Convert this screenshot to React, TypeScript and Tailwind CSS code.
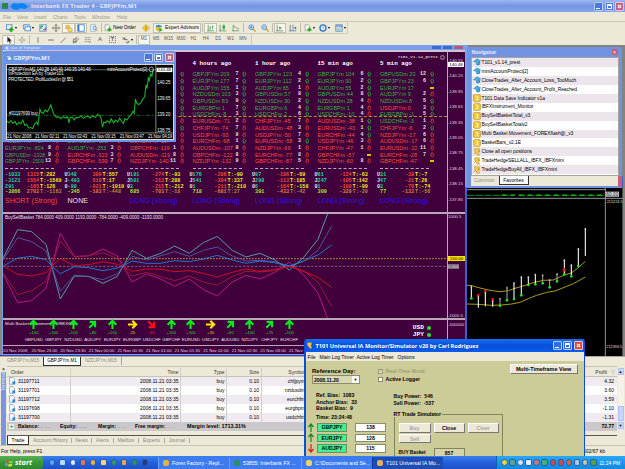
import clsx from "clsx";
import type { ReactNode } from "react";

type Quote = [string, string, string];

const SANS = "font-['Liberation_Sans',Arial,sans-serif]";
const MONO = "font-['Liberation_Mono',monospace]";

/* ---------- market data ---------- */

// symbol + value, strength, arrow (u = up, d = down, e = equal). First `green` rows are long.
const columns: {
  title: string;
  green: number;
  rows: Quote[];
  totals: string[][];
  signal: string;
}[] = [
  {
    title: "",
    green: 14,
    rows: [
      ["", "", ""], ["", "", ""], ["", "", ""], ["", "", ""], ["", "", ""], ["", "", ""], ["", "", ""],
      ["", "", ""], ["", "", ""], ["", "", ""],
      ["AUDJPYm -737", "8", "d"],
      ["EURJPYm -824", "8", "d"],
      ["GBPUSDm -1028", "8", "d"],
      ["GBPJPYm -1509", "13", "d"],
    ],
    totals: [["", "-1033", "1315", "T:282"], ["", "-3123", "1554", "T:-1569"], ["", "291", "-165", "T:126"], ["", "-3866", "2703", "T:-1163"]],
    signal: "SHORT (Strong)",
  },
  {
    title: "",
    green: 12,
    rows: [
      ["", "", ""], ["", "", ""], ["", "", ""], ["", "", ""], ["", "", ""], ["", "", ""], ["", "", ""],
      ["", "", ""], ["", "", ""], ["", "", ""],
      ["EURUSDm -185", "7", "d"],
      ["AUDJPYm -253", "3", "d"],
      ["EURCHFm -323", "3", "d"],
      ["GBPCHFm -599", "7", "d"],
    ],
    totals: [["U", "348", "309", "T:557"], ["J", "-493", "510", "T:17"], ["0", "-98", "-921", "T:-1019"], ["", "-345", "-103", "T:-448"]],
    signal: "NONE",
  },
  {
    title: "",
    green: 7,
    rows: [
      ["", "", "u"], ["", "", "u"], ["", "", "u"], ["", "", "u"], ["", "", "u"], ["", "", "u"], ["", "", "u"],
      ["", "", "d"], ["", "", "u"], ["", "", "d"],
      ["EURCHFm -117", "7", "d"],
      ["GBPCHFm -119", "1", "d"],
      ["AUDUSDm -119", "8", "d"],
      ["NZDJPYm -140", "11", "d"],
    ],
    totals: [["U", "181", "-274", "T:-93"], ["J", "501", "-213", "T:288"], ["0", "3", "-215", "T:-212"], ["", "685", "-703", "T:-18"]],
    signal: "LONG (Strong)",
  },
  {
    title: "4 hours ago",
    green: 7,
    rows: [
      ["GBPJPYm 209", "7", "u"],
      ["EURJPYm 177", "7", "u"],
      ["AUDJPYm 155", "1", "u"],
      ["NZDUSDm 103", "3", "u"],
      ["GBPUSDm 83", "9", "u"],
      ["EURGBPm 1", "7", "u"],
      ["USDCHFm -8", "3", "u"],
      ["EURUSDm -71", "2", "d"],
      ["CHFJPYm -74", "7", "d"],
      ["USDJPYm -93", "9", "d"],
      ["EURCHFm -98", "1", "u"],
      ["AUDUSDm -107", "9", "d"],
      ["GBPCHFm -122", "8", "d"],
      ["NZDJPYm -132", "9", "d"],
    ],
    totals: [["U", "176", "-286", "T:-90"], ["J", "541", "-204", "T:337"], ["0", "1", "-211", "T:-210"], ["", "718", "-681", "T:37"]],
    signal: "LONG (Strong)",
  },
  {
    title: "1 hour ago",
    green: 7,
    rows: [
      ["GBPJPYm 123", "4", "u"],
      ["EURJPYm 112", "2", "u"],
      ["AUDJPYm 65", "1", "d"],
      ["GBPUSDm 57", "8", "u"],
      ["NZDUSDm 30", "2", "u"],
      ["EURGBPm 6", "4", "u"],
      ["USDCHFm 2", "6", "u"],
      ["CHFJPYm -45", "7", "d"],
      ["AUDUSDm -48", "3", "d"],
      ["USDJPYm -50", "7", "d"],
      ["EURUSDm -58", "3", "u"],
      ["NZDJPYm -69", "1", "d"],
      ["EURCHFm -77", "8", "d"],
      ["GBPCHFm -87", "5", "d"],
    ],
    totals: [["U", "97", "-186", "T:-69"], ["J", "298", "-113", "T:185"], ["0", "6", "-164", "T:-158"], ["", "391", "-433", "T:-42"]],
    signal: "LONG (Strong)",
  },
  {
    title: "15 min ago",
    green: 7,
    rows: [
      ["GBPJPYm 104", "6", "u"],
      ["EURJPYm 90", "2", "u"],
      ["AUDJPYm 55", "2", "u"],
      ["GBPUSDm 44", "8", "u"],
      ["NZDUSDm 28", "4", "d"],
      ["EURGBPm 1", "4", "d"],
      ["USDCHFm -10", "4", "d"],
      ["AUDUSDm -38", "1", "u"],
      ["EURUSDm -43", "1", "u"],
      ["EURCHFm -44", "4", "u"],
      ["USDJPYm -46", "3", "d"],
      ["CHFJPYm -47", "1", "d"],
      ["GBPCHFm -57", "", "e"],
      ["NZDJPYm -60", "8", "d"],
    ],
    totals: [["U", "61", "-124", "T:-63"], ["J", "247", "-105", "T:142"], ["0", "1", "-100", "T:-99"], ["", "309", "-329", "T:-20"]],
    signal: "LONG (Strong)",
  },
  {
    title: "5 min ago",
    green: 5,
    rows: [
      ["GBPUSDm 20", "12", "u"],
      ["GBPJPYm 23", "6", "u"],
      ["EURJPYm 17", "", "e"],
      ["AUDJPYm 9", "2", "d"],
      ["NZDUSDm 8", "5", "u"],
      ["USDJPYm 0", "3", "u"],
      ["EURGBPm -1", "5", "u"],
      ["USDCHFm -3", "1", "d"],
      ["CHFJPYm -6", "2", "u"],
      ["NZDJPYm -17", "6", "d"],
      ["AUDUSDm -17", "6", "d"],
      ["EURUSDm -22", "11", "d"],
      ["EURCHFm -28", "7", "d"],
      ["GBPCHFm -47", "", "e"],
    ],
    totals: [["U", "31", "-38", "T:-7"], ["J", "47", "-21", "T:26"], ["0", "3", "-76", "T:-74"], ["", "77", "-133", "T:-56"]],
    signal: "LONG (Strong)",
  },
];

const movement: [string, string, string][] = [
  ["GBPUSD", "+100", "up"],
  ["GBPJPY", "+100", "up"],
  ["NZDUSD", "+100", "up"],
  ["AUDJPY", "+80", "diag"],
  ["EURJPY", "+100", "up"],
  ["EURGBP", "-25", "right"],
  ["USDCHF", "-65", "down"],
  ["GBPCHF", "+100", "up"],
  ["EURUSD", "+100", "up"],
  ["USDJPY", "+30", "right"],
  ["AUDUSD", "+60", "diag"],
  ["NZDJPY", "+100", "up"],
  ["CHFJPY", "+75", "diag"],
  ["EURCHF", "+100", "up"],
];

const orders: [string, string][] = [
  ["31197711", "chfjpym"],
  ["31197701", "nzdusdm"],
  ["31197712", "eurchfm"],
  ["31197698", "eurgbpm"],
  ["31197700", "usdchfm"],
];

const profits = ["4.32", "3.60", "3.59", "-1.10", "-1.31"];

const navItems: [string, string][] = [
  ["ea", "T101_v1.14_prest"],
  ["ea", "miniAccountProtect[2]"],
  ["ea", "CloseTrades_After_Account_Loss_TooMuch"],
  ["ea", "CloseTrades_After_Account_Profit_Reached"],
  ["ind", "T101 Data Save Indicator v1a"],
  ["ind", "IBFXInstrument_Monitor"],
  ["ind", "BuySellBasketTotal_v3"],
  ["ind", "BuySellBasketTotalv2"],
  ["ind", "Multi Basket Movement_FOREXflash@_v3"],
  ["ind", "BasketBars_v2.1E"],
  ["scr", "Close all open positions"],
  ["scr", "TradeHedgeSELLALL_IBFX_IBFXmini"],
  ["scr", "TradeHedgeBuyAll_IBFX_IBFXmini"],
];

/* ---------- basket lines ---------- */

const basket: { color: string; mirror: string; points: number[][] }[] = [
  {
    color: "#5aa9b4",
    mirror: "#c81888",
    points: [[10, 140], [53, 56], [95, 62], [138, 100], [155, 165], [181, 264], [223, 195], [266, 196], [309, 217], [352, 196], [370, 165], [396, 118], [440, 142], [480, 128], [524, 105], [568, 127], [610, 95], [652, 76], [697, 118], [738, 138], [780, 127], [823, 146], [868, 177], [910, 140], [954, 85], [983, 8]],
  },
  {
    color: "#4f5fa6",
    mirror: "#a01c38",
    points: [[10, 145], [53, 80], [95, 92], [138, 120], [155, 165], [181, 241], [223, 193], [266, 197], [309, 206], [352, 188], [370, 165], [396, 136], [440, 147], [480, 135], [524, 122], [568, 136], [610, 118], [652, 108], [697, 135], [738, 150], [780, 148], [823, 152], [868, 165], [910, 152], [954, 118], [995, 45]],
  },
  {
    color: "#1c86dc",
    mirror: "#e00c1c",
    points: [[10, 165], [53, 141], [95, 136], [138, 146], [155, 165], [181, 188], [223, 167], [266, 170], [309, 179], [352, 171], [370, 165], [396, 150], [440, 157], [480, 157], [524, 149], [568, 152], [610, 144], [652, 133], [697, 147], [738, 157], [780, 150], [823, 155], [868, 165], [910, 150], [954, 132], [995, 102]],
  },
];

const toPoints = (pts: number[][], flip = false) =>
  pts.map(([x, y]) => `${x},${flip ? 331 - y : y}`).join(" ");

/* ---------- small parts ---------- */

function CaptionButtons({ bright = false }: { bright?: boolean }) {
  const blue = bright ? "bg-[#2f6cf0]" : "bg-[#4a78dc]";
  return (
    <div className="flex gap-[1.5px]">
      <div className={clsx("flex h-[9px] w-[9px] items-end rounded-[1px] border border-[#b8ccf6] p-px", blue)}>
        <div className="h-px w-[4px] bg-white" />
      </div>
      <div className={clsx("flex h-[9px] w-[9px] items-center justify-center rounded-[1px] border border-[#b8ccf6]", blue)}>
        <div className="h-[5px] w-[5px] border border-t-2 border-white" />
      </div>
      <CloseBox bright={bright} />
    </div>
  );
}

function CloseBox({ bright = false }: { bright?: boolean }) {
  return (
    <div className={clsx("flex h-[9px] w-[9px] items-center justify-center rounded-[1px] border border-[#e8c8d8]", bright ? "bg-[#e0482a]" : "bg-[#c0607c]")}>
      <svg viewBox="0 0 6 6" className="size-[5px]" stroke="#fff" strokeWidth="1.3">
        <path d="M1 1L5 5M5 1L1 5" />
      </svg>
    </div>
  );
}

const glyphs: Record<string, ReactNode> = {
  newChart: (
    <>
      <rect x="0.5" y="1" width="7" height="6" fill="#e8f2fc" stroke="#4a80c0" />
      <path d="M6.5 4v6M3.5 7h6" stroke="#18a818" strokeWidth="2.2" />
    </>
  ),
  profiles: (
    <>
      <rect x="0.8" y="1" width="7" height="5" fill="#d8e8fa" stroke="#4a88d0" />
      <rect x="2.5" y="3.5" width="7" height="5" fill="#eef6ff" stroke="#4a88d0" />
    </>
  ),
  market: (
    <>
      <rect x="1" y="1" width="8" height="8" fill="#dcecfc" stroke="#5a90d0" />
      <path d="M2.5 6V3h2.5" stroke="#18a040" strokeWidth="1.5" fill="none" />
      <path d="M5 7.2h3V4.5" stroke="#d04030" strokeWidth="1.5" fill="none" />
    </>
  ),
  move: <path d="M5 .5v9M.5 5h9M3.5 2L5 .5 6.5 2M3.5 8L5 9.5 6.5 8M2 3.5L.5 5 2 6.5M8 3.5L9.5 5 8 6.5" fill="none" stroke="#666" />,
  nav: (
    <>
      <path d="M1 2h4l1 1.2V6H1z" fill="#f4cc48" stroke="#b08820" strokeWidth=".6" />
      <path d="M4 5h4l1 1v3.5H4z" fill="#f8dc68" stroke="#b08820" strokeWidth=".6" />
    </>
  ),
  terminal: (
    <>
      <rect x="1" y="1" width="8" height="8" fill="#fff" stroke="#3878c8" />
      <rect x="1" y="1" width="2" height="8" fill="#3878c8" />
    </>
  ),
  tester: (
    <>
      <rect x="1" y="1" width="6" height="8" fill="#e4eefa" stroke="#88a8cc" strokeWidth=".8" />
      <circle cx="6" cy="5" r="2" fill="#cde6fa" stroke="#4a80b8" strokeWidth=".8" />
      <path d="M7.5 6.5L9.5 9" stroke="#c89030" strokeWidth="1.2" />
    </>
  ),
  order: (
    <>
      <path d="M1.5 1h4l1.5 1.5V8H1.5z" fill="#fff" stroke="#777" strokeWidth=".7" />
      <path d="M6.8 4.5v5M4.3 7h5" stroke="#18a818" strokeWidth="2" />
    </>
  ),
  warn: (
    <>
      <path d="M5 .5L9.5 5 5 9.5.5 5z" fill="#f8d030" stroke="#c09020" strokeWidth=".7" />
      <path d="M5 3v3M5 6.8v1" stroke="#7a5a10" />
    </>
  ),
  expert: (
    <>
      <circle cx="4.5" cy="5.5" r="3.5" fill="#e4b838" />
      <path d="M.5 4C2 0 7 0 9 3.5z" fill="#2c90d8" />
      <path d="M5.5 5v5l4-2.5z" fill="#20b020" />
    </>
  ),
  bars: <path d="M1.5 1v8M0 8.5h9M4 3v4M3 6h1M4 4h1M7 2v4M6 5h1M7 3h1" fill="none" stroke="#3a9048" strokeWidth=".9" />,
  candles: (
    <>
      <path d="M1.5 1v8M0 8.5h9M6 .5v7" fill="none" stroke="#508858" strokeWidth=".9" />
      <rect x="4.5" y="2" width="3" height="4" fill="#20b040" />
    </>
  ),
  line: <path d="M1.5 1v8M0 8.5h9M2 3c3 0 3 3 7 3" fill="none" stroke="#509060" strokeWidth=".9" />,
  zoomIn: (
    <>
      <path d="M6 6l3.5 3.5" stroke="#d8a030" strokeWidth="1.8" />
      <circle cx="4" cy="4" r="3" fill="#d8ecfc" stroke="#3c7cc8" />
      <path d="M2.5 4h3M4 2.5v3" stroke="#2868c0" strokeWidth=".9" />
    </>
  ),
  zoomOut: (
    <>
      <path d="M6 6l3.5 3.5" stroke="#d8a030" strokeWidth="1.8" />
      <circle cx="4" cy="4" r="3" fill="#d8ecfc" stroke="#3c7cc8" />
      <path d="M2.5 4h3" stroke="#2868c0" strokeWidth=".9" />
    </>
  ),
  scroll: (
    <>
      <path d="M1.5 1v8M0 8.5h9" stroke="#507858" strokeWidth=".9" />
      <path d="M4 3l3.5 2L4 7z" fill="#30a840" />
    </>
  ),
  shift: (
    <>
      <path d="M1.5 1v8M0 8.5h9M5 1v7" stroke="#486c88" strokeWidth=".9" />
      <path d="M9 3L6 5l3 2z" fill="#3878b8" />
    </>
  ),
  clock: (
    <>
      <circle cx="5" cy="5" r="3.8" fill="#e8f4fe" stroke="#2870c8" strokeWidth="1.6" />
      <path d="M5 3v2h1.5" stroke="#555" strokeWidth=".7" fill="none" />
    </>
  ),
  template: (
    <>
      <rect x="1" y="1" width="8" height="8" fill="#e8f4fe" stroke="#4888c8" />
      <path d="M1 2.5h8" stroke="#4888c8" strokeWidth="1.5" />
      <path d="M2 5l2 .5 2-1 2 .5" stroke="#d06030" fill="none" strokeWidth=".8" />
      <path d="M2 7.5l2-.5 2 .5 2-1" stroke="#30a040" fill="none" strokeWidth=".8" />
    </>
  ),
  cursor: <path d="M3 .5v7.5l1.8-1.7 1.2 3 1.2-.6-1.2-2.7H8.5z" fill="#222" />,
  cross: <path d="M5 1v3M5 6v3M1 5h3M6 5h3" stroke="#666" strokeWidth=".9" />,
  vline: <path d="M5 1.5v7" stroke="#666" />,
  hline: <path d="M1.5 5h7" stroke="#555" />,
  trend: <path d="M2 8.5L8.5 2" stroke="#666" />,
  channel: <path d="M1 6L7 1M2 9L9 3M2 3v6M5 2v6M1 7.5h5" stroke="#666" strokeWidth=".9" />,
  fibo: <path d="M1 2h8M1 4.5h8M1 7h8M7 7.5v2" stroke="#777" strokeWidth=".9" strokeDasharray="1.5 .5" />,
  arrows: <path d="M1 2l3 3M4 2L1 4M5 7l2 2 2-3M4 4l3 1" stroke="#444" strokeWidth="1.1" fill="none" />,
  doc: (
    <>
      <path d="M2 .8h4l2 2V9H2z" fill="#fff" stroke="#7890a8" strokeWidth=".9" />
      <rect x="5.5" y="5.5" width="3.5" height="3.5" fill="#2888d8" />
    </>
  ),
  ea: (
    <>
      <path d="M.5 4.5L5 1l4.5 2.5L5.5 6z" fill="#48b0e4" stroke="#2478b0" strokeWidth=".6" />
      <path d="M4 6l5-2v4L6 9.5 4 8.5z" fill="#3090cc" />
      <path d="M5 6.5l2-1v1.5z" fill="#f0d080" />
    </>
  ),
  ind: (
    <>
      <rect x=".8" y=".8" width="8.4" height="8.4" rx="1" fill="#f0c838" stroke="#b88818" strokeWidth=".8" />
      <path d="M3 2.5h2.5v5M3 7.5h4M5.5 4.5h1.5" stroke="#fff6c8" strokeWidth="1" fill="none" />
    </>
  ),
  scr: (
    <>
      <path d="M2 1h6v3l-1 1 1 4H5L4 6 2 5z" fill="#f4cc50" stroke="#c09028" strokeWidth=".7" />
      <path d="M.8 8l3-3M6 3l3 2" stroke="#a87818" strokeWidth=".8" />
    </>
  ),
};

function Glyph({ name, className = "size-[8px]" }: { name: string; className?: string }) {
  return (
    <svg viewBox="0 0 10 10" className={clsx("shrink-0", className)}>
      {glyphs[name]}
    </svg>
  );
}

function Cell({ w, pressed, children }: { w: string; pressed?: boolean; children?: ReactNode }) {
  return (
    <div className={clsx("flex h-[10px] shrink-0 items-center justify-center", w, pressed && "border border-[#c4c0ae] bg-[#f7f5ee]")}>
      {children}
    </div>
  );
}

const Sep = () => <div className="mx-px h-[9px] w-px shrink-0 bg-[#c0bcab]" />;
const Caret = () => <span className="ml-px size-0 border-x-[1.5px] border-t-[2px] border-x-transparent border-t-black" />;

function Toolbars() {
  return (
    <div className="h-[24px] border-t border-[#c9c5b4] text-[5px]">
      <div className="flex h-[12px] w-[348px] items-center border-r border-b border-[#cfcbba] pl-[2px]">
        <Cell w="w-[18px]"><Glyph name="newChart" /><Caret /></Cell>
        <Cell w="w-[16px]"><Glyph name="profiles" /><Caret /></Cell>
        <Cell w="w-[14px]"><Glyph name="market" /></Cell>
        <Cell w="w-[12px]"><Glyph name="move" /></Cell>
        <Cell w="w-[13px]" pressed><Glyph name="nav" /></Cell>
        <Cell w="w-[12px]" pressed><Glyph name="terminal" /></Cell>
        <Cell w="w-[13px]"><Glyph name="tester" /></Cell>
        <Sep />
        <Cell w="w-[36px]"><Glyph name="order" /><span className="ml-px w-[25px] text-[4.9px] tracking-[-0.1px] whitespace-nowrap">New Order</span></Cell>
        <Cell w="w-[14px]"><Glyph name="warn" /></Cell>
        <Cell w="w-[48px]" pressed><Glyph name="expert" /><span className="ml-[2px] text-[4.9px] whitespace-nowrap">Expert Advisors</span></Cell>
        <Sep />
        <Cell w="w-[13px]" pressed><Glyph name="bars" /></Cell>
        <Cell w="w-[12px]"><Glyph name="candles" /></Cell>
        <Cell w="w-[13px]"><Glyph name="line" /></Cell>
        <Sep />
        <Cell w="w-[13px]"><Glyph name="zoomIn" /></Cell>
        <Cell w="w-[13px]"><Glyph name="zoomOut" /></Cell>
        <Sep />
        <Cell w="w-[12px]" pressed><Glyph name="scroll" /></Cell>
        <Cell w="w-[13px]"><Glyph name="shift" /></Cell>
        <Sep />
        <Cell w="w-[15px]"><Glyph name="order" /><Caret /></Cell>
        <Cell w="w-[15px]"><Glyph name="clock" /><Caret /></Cell>
        <Cell w="w-[16px]"><Glyph name="template" /><Caret /></Cell>
      </div>
      <div className="flex h-[12px] w-[252px] items-center border-r border-b border-[#cfcbba] pl-[2px] text-[4.6px] text-[#555]">
        <Cell w="w-[13px]" pressed><Glyph name="cursor" /></Cell>
        <Cell w="w-[13px]"><Glyph name="cross" /></Cell>
        <Sep />
        <Cell w="w-[14px]"><Glyph name="vline" /></Cell>
        <Cell w="w-[12px]"><Glyph name="hline" /></Cell>
        <Cell w="w-[12px]"><Glyph name="trend" /></Cell>
        <Cell w="w-[13px]"><Glyph name="channel" /></Cell>
        <Cell w="w-[12px]"><Glyph name="fibo" /></Cell>
        <Cell w="w-[12px]"><span className="text-[6px] leading-[7px]">A</span></Cell>
        <Cell w="w-[13px]"><span className="size-[7px] border border-dotted border-[#777] text-center text-[5px] leading-[5px] font-bold">T</span></Cell>
        <Cell w="w-[16px]"><Glyph name="arrows" /><Caret /></Cell>
        <Sep />
        <Cell w="w-[12px]" pressed>M1</Cell>
        {["M5", "M15", "M30", "H1", "H4", "D1", "W1", "MN"].map((t) => (
          <Cell key={t} w="w-[12.4px]">{t}</Cell>
        ))}
      </div>
    </div>
  );
}

/* ---------- purple chart window ---------- */

function Mark({ kind }: { kind: string }) {
  if (kind === "e") return <div className="h-[2px] w-[4px] bg-[#d8c800]" />;
  if (kind === "") return null;
  return (
    <svg viewBox="0 0 5 6" className={clsx("h-[6px] w-[4.5px]", kind === "d" && "rotate-180")}>
      <path d="M2.5 .5L4.5 2.8H3.5V5.3H1.5V2.8H.5z" fill="none" stroke={kind === "u" ? "#2fae3c" : "#f0402c"} strokeWidth=".8" />
    </svg>
  );
}

function QuoteColumn({ col }: { col: (typeof columns)[number] }) {
  const late = col.title === "5 min ago";
  return (
    <div className="w-[62.5px] shrink-0">
      <div className={clsx("h-[12px] pt-[2px] text-[5.9px] leading-[6px] font-bold text-white", MONO)}>{col.title}</div>
      {col.rows.map(([label, n, kind], i) => (
        <div key={i} className="flex h-[6.7px] items-center leading-[6px] whitespace-nowrap">
          <span
            className={clsx(
              "w-[40px]",
              label.length > 12 ? "text-[5.1px]" : "text-[5.5px]",
              i < col.green || (late && (i === 6 || i === 7)) ? "text-[#36b440]" : "text-[#fa5038]",
            )}
          >
            {label}
          </span>
          <span className={clsx("w-[6px] text-right text-[5px] font-bold text-[#e8e0e8]", MONO)}>{n}</span>
          <span className="flex w-[11.5px] justify-center"><Mark kind={kind} /></span>
        </div>
      ))}
      <div className="flex h-[8px] items-center">
        <div className="h-px w-[49px] border-t border-dashed border-[#b8a8b8]" />
      </div>
      {col.totals.map(([tag, a, b, t], i) => (
        <div key={i} className={clsx("-ml-[3px] flex h-[5.6px] items-center text-[5.1px] leading-[6px] font-bold whitespace-nowrap", MONO)}>
          <span className="w-[3.1px] text-[#f0e8f0]">{tag}</span>
          <span className={clsx("w-[16px]", i === 3 ? "text-[#a4ec34]" : "text-[#18dca0]")}>{a}</span>
          <span className={clsx("w-[18px] text-right", i === 3 ? "text-[#e08040]" : "text-[#f44a30]")}>{b}</span>
          <span className={clsx("ml-px", i === 3 ? "text-[#b88c34]" : "text-[#f4ec20]")}>{t}</span>
        </div>
      ))}
      <div
        className={clsx(
          "pt-[2px] text-[7.1px] leading-[8px] whitespace-nowrap",
          col.signal === "NONE" ? "text-[#e8e0e8]" : col.signal.startsWith("SHORT") ? "text-[#f44c38]" : "text-[#2a10f0]",
        )}
      >
        {col.signal}
      </div>
    </div>
  );
}

function BigArrow({ kind }: { kind: string }) {
  const turn = kind === "up" ? "" : kind === "diag" ? "rotate-45" : kind === "right" ? "rotate-90" : "rotate-[135deg]";
  const color = kind === "right" ? "#ffe600" : kind === "down" ? "#ff1010" : "#00f018";
  return (
    <svg viewBox="0 0 12 12" className={clsx("size-[11px]", turn)}>
      <path d="M6 11V3M1.8 6.2L6 2l4.2 4.2" fill="none" stroke={color} strokeWidth="2.3" />
    </svg>
  );
}

const priceScale = ["140.55", "140.25", "139.95", "139.65", "139.35", "139.05", "138.75", "138.45", "138.15", "137.85"];

function PurpleWindow() {
  return (
    <div className="absolute top-[45px] left-0 h-[311px] w-[468px] border-l-2 border-[#8c8880] bg-[#7ba0ea]">
      <div className="flex h-[5px] items-center pr-[5px] pl-[3px]">
        <span className="flex-1 text-[4.2px] leading-[5px] text-[#dce8fc]">▣ Use of Template</span>
        <div className="flex gap-[2px]">
          <div className="h-[3px] w-[9px] bg-[#3a68d4]" />
          <div className="h-[3px] w-[9px] bg-[#3a68d4]" />
          <div className="h-[3px] w-[9px] bg-[#b85878]" />
        </div>
      </div>
      <div className="mr-[3px] ml-px flex h-[304px] flex-col border-t-2 border-[#cfc4cf] bg-[#40003c]">
        <div className="flex h-[160px] shrink-0">
          <div className="relative w-[445px] shrink-0 overflow-hidden border-r border-[#b8a8b8] pt-[7px] pl-[2px]">
            <div className="flex">
              {columns.map((col, i) => (
                <QuoteColumn key={i} col={col} />
              ))}
            </div>
            <div className="absolute top-[64px] left-0 w-full border-t border-dashed border-[#a89830]" />
            <div className={clsx("absolute top-0.5 right-[2px] flex items-center gap-[2px] text-[4.2px] leading-[6px] text-white", MONO)}>
              T101_v1.14_prest
              <svg viewBox="0 0 10 10" className="size-[5px]" fill="none" stroke="#e8e0e8">
                <circle cx="5" cy="5" r="4.2" />
                <path d="M3 6q2 2 4 0M3.5 3v1M6.5 3v1" />
              </svg>
            </div>
          </div>
          <div className="flex flex-col pt-[6px] text-[4.4px] text-[#e0d4e0]">
            {priceScale.map((p) => (
              <div key={p} className="flex h-[16.35px] items-start leading-[5px]">
                <span>-{p}</span>
              </div>
            ))}
          </div>
          <div className="absolute top-[17px] left-[446px] w-[16px] bg-white text-center text-[4.4px] leading-[5px] text-black">140.48</div>
        </div>
        <div className="flex h-[106px] shrink-0 border-t-2 border-[#b8a8b8]">
          <div className="relative w-[445px] border-r border-[#b8a8b8]">
            <svg viewBox="9 9 1332 312" className="h-[104px] w-[444px]" fill="none">
              <path d="M9 143H1341" stroke="#b89838" strokeWidth="3" strokeDasharray="5 4" />
              <path d="M9 166H1341" stroke="#8c6c8c" strokeWidth="2.5" strokeDasharray="8 4" />
              {basket.map((l) => (
                <g key={l.color} strokeWidth="2.7">
                  <polyline points={toPoints(l.points, true)} stroke={l.mirror} />
                  <polyline points={toPoints(l.points)} stroke={l.color} />
                </g>
              ))}
            </svg>
            <span className="absolute top-[1px] left-[2px] text-[4.5px] leading-[5px] whitespace-nowrap text-[#e8e0e8]">
              BuySellBasket 784.0000 409.0000 1193.0000 -784.0000 -409.0000 -1193.0000
            </span>
          </div>
          <div className="flex w-[17px] flex-col text-[4.4px] leading-[5px] text-[#e0d4e0]">
            <span>1000.5</span>
            <span className="mt-[37px] bg-[#f4e400] text-center text-black">150.00</span>
            <span className="mt-[3px] w-[11px] bg-[#786878]">0.000</span>
            <span className="mt-auto">-1000.5</span>
          </div>
        </div>
        <div className="flex flex-1 border-t-2 border-[#b8a8b8]">
          <div className="relative flex w-[445px] flex-col border-r border-[#b8a8b8]">
            <span className="absolute top-[1px] left-[2px] text-[4.4px] leading-[5px] whitespace-nowrap text-[#e8e0e8]">
              Multi Basket Movement_FOREXflash
            </span>
            <div className="relative -mt-px flex h-[26px] pl-[21px]">
              {movement.map(([pair, pct, kind]) => (
                <div key={pair} className="flex w-[19.65px] shrink-0 flex-col items-center">
                  <BigArrow kind={kind} />
                  <span className={clsx("text-[4.2px] leading-[5px]", kind === "right" ? "text-[#e0c820]" : kind === "down" ? "text-[#f02828]" : "text-[#20dc34]")}>{pct}</span>
                  <span className="mt-[2px] text-[4.3px] leading-[5px] text-[#e8e0e8]">{pair}</span>
                </div>
              ))}
              <div className={clsx("absolute top-[5px] right-[16px] text-right text-[6.2px] leading-[7px] font-bold text-white", MONO)}>
                <div className="flex items-center gap-[3px]">USD <i className="size-[4px] rounded-full bg-[#30e030]" /></div>
                <div className="flex items-center gap-[3px]">JPY <i className="size-[4px] rounded-full bg-[#30e030]" /></div>
              </div>
            </div>
            <div className="mt-auto flex h-[9px] items-center border-t border-[#b8a8b8] text-[4.3px] leading-[5px] whitespace-nowrap text-[#e0d4e0]">
              {["20 Nov 2008", "20 Nov 23:00", "20 Nov 23:30", "21 Nov 00:00", "21 Nov 00:30", "21 Nov 01:00", "21 Nov 01:30", "21 Nov 02:00", "21 Nov 02:30", "21 Nov 03:00", "21 Nov 03:30"].map((t) => (
                <span key={t} className="w-[28.6px] shrink-0">{t}</span>
              ))}
            </div>
          </div>
          <span className="pt-[2px] text-[4.4px] leading-[5px] text-[#e0d4e0]">-500000</span>
        </div>
      </div>
      <div className="mt-[1px] -ml-[2px] h-px w-[470px] bg-[#2c48b8]" />
    </div>
  );
}

/* ---------- small black chart ---------- */

const smallLine =
  "18,225 24,230 30,223 36,232 42,226 48,236 54,229 60,233 66,222 72,238 78,235 84,246 90,244 96,247 102,234 108,228 112,236 118,190 122,200 128,202 134,192 140,198 146,188 151,177 156,194 162,207 168,214 174,212 182,218 188,212 196,216 202,212 206,230 210,214 216,213 222,222 228,214 236,215 242,209 250,217 256,213 264,210 270,216 278,210 286,214 294,205 300,210 304,218 308,243 312,228 318,230 322,224 330,230 334,218 342,230 348,222 354,228 360,216 366,226 372,232 376,218 382,222 388,213 394,208 400,196 404,202 408,160 412,172 418,176 424,172 430,160 436,154 440,118 443,128 447,98 450,105 454,86 458,92 462,72";

function SmallChart() {
  return (
    <div className="absolute top-[51px] left-[3px] flex h-[91px] w-[173px] flex-col rounded-t-[3px] bg-[#6d92e4] px-[2.5px] pb-[2.5px]">
      <div className="flex h-[12.5px] items-center justify-between pt-px text-white">
        <div className="flex items-center gap-[2px]">
          <Glyph name="profiles" className="size-[6px]" />
          <span className="font-['Open_Sans',sans-serif] text-[5.9px] leading-[8px] font-semibold">GBPJPYm,M1</span>
        </div>
        <CaptionButtons />
      </div>
      <div className="flex-1 border border-[#dcd8cc] bg-black text-white">
        <svg viewBox="18 59 504 219" className={clsx("h-full w-full", SANS)} preserveAspectRatio="none">
          <path d="M18 73H470" stroke="#7c98a0" strokeWidth="2" />
          <path d="M470 59V260M18 260H522" stroke="#c8c8c8" strokeWidth="2" fill="none" />
          <path d="M18 208H470" stroke="#2c8c30" strokeWidth="2" strokeDasharray="14 5 4 5" />
          <polyline points={smallLine} fill="none" stroke="#18b428" strokeWidth="3.3" />
          <g fill="#f0f0f0" fontSize="13.5">
            <text x="22" y="77" textLength="250">GBPJPYm,M1 140.38 140.49 140.35 140.48</text>
            <text x="22" y="90" textLength="168">InProtection EA by Trader101</text>
            <text x="22" y="105" textLength="198">PROTECTED: ProfitLocked in @ $51</text>
            <text x="322" y="77" textLength="122">miniAccountProtect[2]</text>
            <text x="24" y="206" textLength="88">#31197699 buy</text>
            {[["140.25", 116], ["139.65", 162], ["139.20", 209], ["138.75", 256]].map(([t, y]) => (
              <text key={t} x="474" y={y} textLength="40">{t}</text>
            ))}
            {[["21 Nov 2008", 18], ["21 Nov 02:11", 103], ["21 Nov 02:43", 188], ["21 Nov 03:15", 274], ["21 Nov 03:47", 360], ["21 Nov 04:19", 446]].map(([t, x]) => (
              <text key={t} x={x} y="274" textLength="74">{t}</text>
            ))}
          </g>
          <circle cx="456" cy="72" r="7" fill="none" stroke="#e8e8e8" strokeWidth="2" />
          <rect x="472" y="67" width="48" height="13" fill="#fff" />
          <text x="476" y="78" fontSize="13" fill="#000" textLength="40">140.48</text>
        </svg>
      </div>
    </div>
  );
}

/* ---------- right side ---------- */

const candles: [number, number, number, string][] = [
  [19, 302, 340, "g"], [40, 332, 368, "r"], [61, 320, 364, "r"], [83, 345, 365, "r"], [105, 338, 362, "g"], [126, 305, 346, "g"], [147, 292, 342, "g"],
  [169, 274, 331, "g"], [190, 274, 300, "g"], [211, 266, 298, "g"], [233, 268, 295, "g"], [254, 282, 307, "g"], [276, 264, 289, "g"], [298, 223, 268, "g"],
  [319, 238, 274, "g"], [340, 189, 243, "g"], [361, 129, 213, ""],
];

function BasketChart() {
  return (
    <div className="absolute top-[187px] left-[465px] h-[169px] w-[158px] border-l-2 border-[#3f5fd0] bg-black">
      <svg viewBox="6 6 468 507" className={clsx("h-[169px] w-[156px]", SANS)}>
        <path d="M6 14H421M6 40H474M421 6V513M474 6V513" stroke="#b0b0b0" strokeWidth="2.5" />
        <path d="M6 31H150M160 32H420" stroke="#108c18" strokeWidth="3" strokeDasharray="22 4" />
        <path d="M110 30H420" stroke="#20d028" strokeWidth="3" strokeDasharray="14 12" />
        <rect x="422" y="20" width="40" height="15" fill="#d8d8d8" />
        <text x="424" y="33" fontSize="14" textLength="36" fill="#222">60.00</text>
        <text x="425" y="54" fontSize="12" textLength="48" fill="#d8d8d8">215224.5</text>
        <text x="424" y="488" fontSize="12" textLength="48" fill="#d8d8d8">212396.5</text>
        <g fill="none" stroke="#b4a81c" strokeWidth="2.8">
          <polyline points="6,301 20,302 45,309 75,316 105,320 130,317 150,310 180,301 205,293 235,286 265,285 298,270 319,264 340,248 361,229" />
          <polyline points="6,357 40,358 80,361 110,360 140,357 165,352 190,341 215,331 245,322 270,318 300,306 325,296 345,285 361,276" />
        </g>
        {candles.map(([x, top, bottom, dot], i) => (
          <g key={x}>
            <path d={`M${x} ${top}V${bottom}`} stroke={[4, 5, 10, 11, 12].includes(i) ? "#a0a0a0" : "#fff"} strokeWidth="3.2" />
            <path d={`M${x - 3} ${top + 4}h6`} stroke="#ccc" strokeWidth="2" />
            {dot === "g" && <circle cx={x} cy={bottom} r="4" fill="#18e820" />}
            {dot === "r" && <circle cx={x} cy={top - 2} r="4" fill="#f01818" />}
          </g>
        ))}
        <path d="M298 247l2 6h6l-5 4 2 6-5-4-5 4 2-6-5-4h6z" fill="#d02020" />
      </svg>
    </div>
  );
}

function Navigator() {
  return (
    <div className="absolute top-[47px] left-[467px] flex h-[141px] w-[155px] flex-col rounded-t-[3px] bg-[#6f92e2] px-[3.5px] pb-[2px]">
      <div className="flex h-[10px] items-center justify-between pl-px">
        <span className="font-['Open_Sans',sans-serif] text-[5px] leading-[7px] font-bold text-[#e4ecfc]">Navigator</span>
        <div className="mr-px flex size-[6px] items-center justify-center bg-[#c86078] text-[5px] leading-none text-white">×</div>
      </div>
      <div className="flex-1 border border-[#a8a498] bg-white">
        {navItems.map(([icon, label], i) => (
          <div key={label} className={clsx("flex h-[8.95px] items-center gap-px pl-px text-[4.9px] whitespace-nowrap", i % 2 === 0 && "bg-[#ece6ec]")}>
            <Glyph name={icon} />
            <span className="tracking-[-0.05px]">{label}</span>
          </div>
        ))}
      </div>
      <div className="flex h-[10px] bg-[#ece9d8] text-[5px] leading-[9px]">
        <span className="w-[28px] text-center text-[#888478]">Common</span>
        <span className="h-[9px] w-[30px] border border-t-0 border-[#333] bg-white text-center leading-[8px]">Favorites</span>
      </div>
    </div>
  );
}

/* ---------- terminal ---------- */

function Row({ shade, children }: { shade?: boolean; children: ReactNode }) {
  return <div className={clsx("flex h-[8.95px] items-center", shade ? "bg-[#efebf0]" : "bg-white")}>{children}</div>;
}

function Terminal() {
  const c = "flex h-full shrink-0 items-center border-r border-[#d4d0c4] pr-[1.5px]";
  return (
    <div className="absolute top-[356px] left-0 h-[100px] w-[625px] bg-[#ece9d8] text-[5px] leading-[6px] whitespace-nowrap">
      <div className="flex h-[10px] items-start border-t border-[#aaa698] pl-px text-[4.6px] leading-[8px] text-[#8c887c]">
        <span className="w-[42px] pl-[6px]">GBPJPYm,M15</span>
        <span className="w-[38px] border border-t-0 border-[#333] bg-white text-center text-black">GBPJPYm,M1</span>
        <span className="w-[41px] border-r border-[#aaa698] pl-[4px]">NZDJPYm,M15</span>
      </div>
      <div className="flex h-[79px]">
        <div className="flex w-[7px] shrink-0 flex-col items-center">
          <span className="h-[6px] text-[5px] leading-[6px]">×</span>
          <div className="flex w-[5px] flex-1 items-start bg-[#7896dc] text-[5px] leading-[5px] text-[#d8e4fc] [writing-mode:vertical-rl]">
            <span className="rotate-180 pt-[2px]">Terminal</span>
          </div>
        </div>
        <div className="flex w-[610px] flex-col">
          <div className="flex h-[11px] items-end border-t border-[#c8c4b4]">
            <div className="flex h-[9px] w-full border-b border-[#c8c4b4] text-[#333]">
              <div className={clsx(c, "w-[64px] pl-[4px]")}>Order</div>
              <div className={clsx(c, "w-[110px] justify-end")}>Time</div>
              <div className={clsx(c, "w-[46px] justify-end")}>Type</div>
              <div className={clsx(c, "w-[34.5px] justify-end")}>Size</div>
              <div className={clsx(c, "w-[46px] justify-end")}>Symbol</div>
              <div className="flex flex-1 items-center justify-end pr-[2px]">Profit <span className="ml-[4px] text-[#888]">▽</span></div>
            </div>
          </div>
          {orders.map(([id, sym], i) => (
            <Row key={id} shade={i % 2 === 0}>
              <div className={clsx(c, "w-[64px] pl-px")}><Glyph name="doc" /><span className="ml-[2px]">{id}</span></div>
              <div className={clsx(c, "w-[110px] justify-end")}>2008.11.21 03:35</div>
              <div className={clsx(c, "w-[46px] justify-end")}>buy</div>
              <div className={clsx(c, "w-[34.5px] justify-end")}>0.10</div>
              <div className={clsx(c, "w-[46px] justify-end")}>{sym}</div>
              <div className="flex flex-1 justify-end pr-[3px]">{profits[i]}</div>
            </Row>
          ))}
          <div className="flex h-[9px] items-center bg-[#cbc8cb] pr-[3px] pl-[2px] text-[5px] font-bold">
            <span className="flex size-[5px] items-center justify-center bg-[#e8f8e8] text-[6px] leading-none text-[#108c18]">+</span>
            <span className="ml-[4px] w-[42px]">Balance: <span className="text-[#a8a4a8]">.. ....</span></span>
            <span className="w-[38px]">Equity: <span className="text-[#a8a4a8]">......</span></span>
            <span className="w-[37px]">Margin: <span className="text-[#a8a4a8]">.. ...</span></span>
            <span className="w-[52px]">Free margin: <span className="text-[#a8a4a8]">.. ...</span></span>
            <span className="text-[5.4px]">Margin level: 1713.31%</span>
            <span className="ml-auto">72.77</span>
          </div>
          <div className="flex-1" />
          <div className="flex h-[10px] items-center border-t border-[#555] text-[#8c887c]">
            <span className="h-full w-[22px] border-r border-b border-l border-[#333] bg-white text-center leading-[8px] text-black">Trade</span>
            <span className="w-[43px] border-r border-[#aaa] pl-[4px] leading-[5px]">Account History</span>
            <span className="w-[20px] border-r border-[#aaa] text-center leading-[5px]">News</span>
            <span className="w-[22px] border-r border-[#aaa] text-center leading-[5px]">Alerts</span>
            <span className="w-[25px] border-r border-[#aaa] text-center leading-[5px]">Mailbox</span>
            <span className="w-[26px] border-r border-[#aaa] text-center leading-[5px]">Experts</span>
            <span className="w-[25px] border-r border-[#aaa] text-center leading-[5px]">Journal</span>
          </div>
        </div>
        <div className="flex w-[7px] flex-col items-center pt-[2px]">
          <div className="h-[7px] w-[6px] border border-[#b0c4f0] bg-[#c8d8fc] text-center text-[4px] leading-[5px]">▲</div>
          <div className="h-[31px] w-[6px] bg-[#f4f2ea]" />
          <div className="h-[15px] w-[6px] border border-[#b0c4f0] bg-[#c4d4fa]" />
          <div className="mt-px h-[7px] w-[6px] border border-[#b0c4f0] bg-[#c8d8fc] text-center text-[4px] leading-[5px]">▼</div>
        </div>
      </div>
      <div className="flex h-[11px] items-center justify-between border-t border-[#c8c4b4] pr-[20px] pl-px">
        <span>For Help, press F1</span>
        <span>502/67 kb</span>
      </div>
    </div>
  );
}

/* ---------- simulator window ---------- */

function FormButton({ children, disabled, className }: { children: ReactNode; disabled?: boolean; className?: string }) {
  return (
    <div
      className={clsx(
        "flex items-center justify-center border border-t-white border-r-[#777] border-b-[#777] border-l-white bg-[#ece9d8] leading-[6px]",
        disabled ? "text-[#a8a498]" : "font-bold",
        className,
      )}
    >
      {children}
    </div>
  );
}

const pairs: [string, string, boolean][] = [
  ["GBPJPY", "138", true],
  ["EURJPY", "128", true],
  ["AUDJPY", "115", false],
];

function Simulator() {
  return (
    <div className="absolute top-[339px] left-[304px] flex h-[117px] w-[281px] flex-col overflow-hidden rounded-t-[3px] bg-[#0a4fdc] px-[1.5px] text-[5px] leading-[6px] whitespace-nowrap">
      <div className="flex h-[13px] shrink-0 items-center justify-between bg-gradient-to-b from-[#1c6cf4] via-[#0450d8] to-[#0c5cec] pr-px">
        <div className="flex items-center gap-[3px]">
          <Glyph name="scr" className="size-[7px]" />
          <span className="font-['Open_Sans',sans-serif] text-[5.6px] leading-[8px] font-bold text-white">T101 Universal IA Monitor/Simulator v20 by Carl Rodriguez</span>
        </div>
        <CaptionButtons bright />
      </div>
      <div className="flex h-[9px] shrink-0 items-center bg-[#ece9d8] pl-[2px]">
        <span className="w-[12px]">File</span>
        <span className="w-[37px]">Main Log Timer</span>
        <span className="w-[41px]">Active Log Timer</span>
        <span>Options</span>
      </div>
      <div className="flex flex-1 bg-[#cccc99] font-bold">
        <div className="w-[88px] shrink-0 pt-[7px]">
          <div className="pl-[6.5px]">
            <div className="text-[6px] leading-[7px]">Reference Day:</div>
            <div className="flex h-[9px] w-[48px] items-center justify-between border border-[#8c8c6c] bg-[#d8d8b4] pl-px">
              2008.11.20
              <span className="flex h-full w-[7px] items-center justify-center bg-white text-[4px]">▼</span>
            </div>
          </div>
          <div className="pt-[8px] pl-[10.5px] text-[5.2px] leading-[6.7px]">
            <div>Ref. Bias:&nbsp; 1083</div>
            <div>Anchor Bias:&nbsp; 33</div>
            <div>Basket Bias:&nbsp; 9</div>
            <div className="pt-[2px]">Time: 23:24:48</div>
          </div>
          <div className="flex flex-col gap-[2px] pt-[2px]">
            {pairs.map(([name, v, up]) => (
              <div key={name} className="flex h-[8.7px] items-center">
                <svg viewBox="0 0 6 9" className={clsx("ml-[2px] h-[9px] w-[6px]", !up && "rotate-180")}>
                  <path d="M3 9V1M.5 4L3 1l2.5 3" fill="none" stroke={up ? "#108820" : "#e01818"} strokeWidth="1.2" />
                </svg>
                <span className="ml-[3.5px] h-full w-[30px] border border-[#6c8c6c] bg-[#44f090] text-center text-[5.2px] leading-[7px]">{name}</span>
                <span className="ml-[8px] h-full w-[31px] border border-[#8c8c6c] bg-white text-center text-[5.2px] leading-[7px]">{v}</span>
              </div>
            ))}
          </div>
        </div>
        <div className="flex flex-1 flex-col pt-[3px]">
          <div className="flex h-[29px]">
            <div className="w-[116px] pt-[4px]">
              <div className="-ml-[17px] flex items-center gap-[3px] pl-px text-[#a0a078]">
                <span className="flex size-[5px] items-center justify-center border border-[#9c9c7c] bg-[#e0e0c8] text-[4px]">✓</span>
                <span className="text-[5.2px]">Real-Time Mode</span>
              </div>
              <div className="mt-[2px] -ml-[17px] flex items-center gap-[3px] pl-px">
                <span className="size-[5px] border border-[#8c8c6c] bg-white" />
                <span className="text-[5.2px]">Active Logger</span>
              </div>
            </div>
            <FormButton className="h-[10px] w-[68px] border-[#555] text-[5.4px]">Multi-Timeframe View</FormButton>
          </div>
          <div className="text-[5.1px] leading-[6.7px]">
            <div>Buy Power:&nbsp; 546</div>
            <div>Sell Power:&nbsp; -537</div>
          </div>
          <div className="relative mt-[8px] h-[48px] w-[109px] border border-[#84845c] px-[4px] pt-[8px]">
            <span className="absolute -top-[4px] -left-px bg-[#cccc99] pr-px text-[5.2px]">RT Trade Simulator</span>
            <div className="grid grid-cols-[32px_31px_31px] gap-x-[3px] text-[5.2px]">
              <FormButton disabled className="h-[10px]">Buy</FormButton>
              <FormButton className="h-[10px]">Close</FormButton>
              <FormButton disabled className="h-[10px]">Clear</FormButton>
              <FormButton disabled className="mt-px h-[9px]">Sell</FormButton>
            </div>
            <div className="flex items-center gap-[7px] pt-[5px]">
              <span className="w-[28px] text-[4.8px]">BUY Basket</span>
              <span className="h-[9px] w-[31px] border border-[#84845c] bg-[#d4d4ac] text-center leading-[8px]">857</span>
            </div>
          </div>
        </div>
      </div>
    </div>
  );
}

/* ---------- taskbar ---------- */

const quick = ["bg-[#58a8f0]", "bg-[#b8dcf8]", "bg-[#e0e8f4]", "bg-[#e8744c]", "bg-[#e8b838]", "bg-[#f0d880]", "bg-[#38985c]", "bg-[#e8a850]", "bg-[#2c9060]", "bg-[#203c70]"];
const tray = ["bg-[#f0d040]", "bg-[#58a890]", "bg-[#d8e4f0]", "bg-[#e8f0fa]", "bg-[#c87888]", "bg-[#48b070]", "bg-[#d84848]", "bg-[#d84848]", "bg-[#e06838]", "bg-[#b0c8d8]", "bg-[#c8c4b8]", "bg-[#58a038]"];

function Task({ active, icon, w, children }: { active?: boolean; icon: string; w: string; children: ReactNode }) {
  return (
    <div className={clsx("flex h-[12px] shrink-0 items-center gap-[3px] rounded-[1px] border-l pl-[4px]", w, active ? "border-[#123c98] bg-[#1c4cb4]" : "border-[#6ca0f8] bg-[#3c7cf0]")}>
      <span className={clsx("size-[6px] shrink-0 rounded-[2px]", icon)} />
      <span>{children}</span>
    </div>
  );
}

function Taskbar() {
  return (
    <div className="absolute top-[456px] left-0 flex h-[13px] w-[625px] items-center bg-gradient-to-b from-[#3a80f0] via-[#2460dc] to-[#1c50c8] text-[5.2px] leading-[6px] whitespace-nowrap text-white">
      <div className="flex h-full w-[43px] items-center gap-[2px] rounded-r-[4px] bg-gradient-to-b from-[#58b058] via-[#389838] to-[#2c882c] pl-[5px]">
        <svg viewBox="0 0 10 10" className="size-[8px]">
          <path d="M0 2q2-1.5 4.5 0L4 5Q2 4-.5 5z" fill="#f05030" />
          <path d="M5.2 2.2Q7.5 3.5 10 2L9.3 5Q7 6 4.7 5z" fill="#80d040" />
          <path d="M-.3 5.8Q2 4.8 3.9 5.9L3 9Q1 8-1 9z" fill="#58a0f8" />
          <path d="M4.6 6Q7 7 9.2 5.9L8.4 9Q6 10 3.8 9z" fill="#f8d030" />
        </svg>
        <span className="font-['Open_Sans',sans-serif] text-[7.4px] leading-[9px] font-bold italic">start</span>
      </div>
      <div className="flex w-[115px] gap-[4px] pl-[6px]">
        {quick.map((q, i) => (
          <span key={i} className={clsx("size-[6.3px] shrink-0 border border-[#2c58b0]", i % 2 === 0 ? "rounded-full" : "rounded-[2px]", q)} />
        ))}
      </div>
      <Task icon="bg-[#e8b040]" w="w-[71px]">Forex Factory - Repl...</Task>
      <Task icon="bg-[#2c9060]" w="w-[72px]">53855: Interbank FX ...</Task>
      <Task icon="bg-[#f0d060]" w="w-[71px]">C:\Documents and Se...</Task>
      <Task icon="bg-[#e0b060]" w="w-[71px]" active>T101 Universal IA Mo...</Task>
      <div className="ml-auto flex h-full w-[129px] items-center gap-[1.6px] border-l border-[#0c60b0] bg-gradient-to-b from-[#28a8f4] to-[#1088e0] pl-[4px]">
        {tray.map((t, i) => (
          <span key={i} className={clsx("size-[6.5px] shrink-0 border border-[#2060a8]", i % 2 ? "rounded-[2px]" : "rounded-full", t)} />
        ))}
        <span className="ml-px text-[5px]">11:24 PM</span>
      </div>
    </div>
  );
}

export default function App() {
  return (
    <div className={clsx("relative h-[469px] w-[625px] overflow-hidden bg-[#84827c] text-black", SANS)}>
      <header className="flex h-[45px] flex-col bg-[#ece9d8]">
        <div className="flex h-[12px] items-center justify-between bg-gradient-to-b from-[#9cb8f0] via-[#7494e0] to-[#84a6ee] pr-px pl-[2px]">
          <div className="flex items-center">
            <span className="flex size-[6px] items-center justify-center bg-[#288850]" />
            <svg viewBox="0 0 20 9" className="ml-[2px] h-[8px] w-[19px]">
              <path d="M0 5L3 1l5 1 4-1 4 1 4 3-4 3-5-1-4 2-5-1z" fill="#0c84f4" />
            </svg>
            <span className="ml-[2px] font-['Open_Sans',sans-serif] text-[5.85px] leading-[8px] font-bold text-[#e4ecfc]">Interbank FX Trader 4 - GBPJPYm,M1</span>
          </div>
          <CaptionButtons />
        </div>
        <div className="flex h-[9px] items-center pl-[3px] text-[5px] leading-[6px] text-[#9c988a]">
          <span className="w-[14px]">File</span>
          <span className="w-[17px]">View</span>
          <span className="w-[19px]">Insert</span>
          <span className="w-[21px]">Charts</span>
          <span className="w-[18px]">Tools</span>
          <span className="w-[25px]">Window</span>
          <span>Help</span>
        </div>
        <Toolbars />
      </header>
      <PurpleWindow />
      <SmallChart />
      <BasketChart />
      <Navigator />
      <div className="absolute top-[176px] left-[618px] h-[11px] w-[5px] rounded-tr-[2px] border-r border-[#3f5fd0] bg-[#c0607c]" />
      <Terminal />
      <Simulator />
      <Taskbar />
    </div>
  );
}
